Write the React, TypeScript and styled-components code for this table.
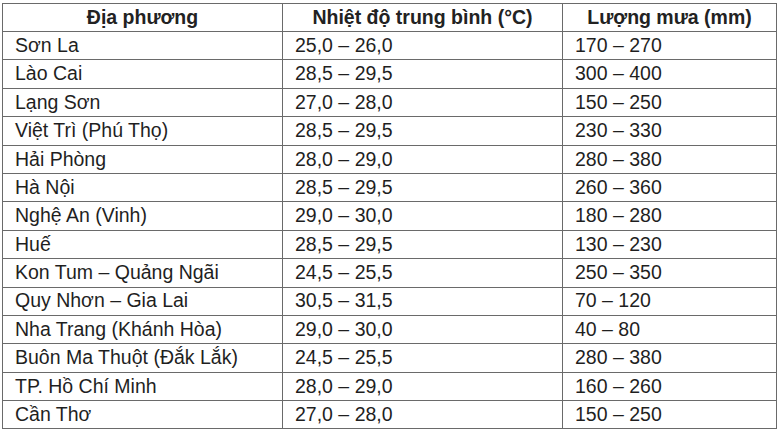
import React from 'react'
import styled, { createGlobalStyle } from 'styled-components'

const GlobalStyle = createGlobalStyle`
  html, body {
    margin: 0;
    padding: 0;
    background: #ffffff;
  }
`

const Page = styled.div`
  padding: 3px 0 0 2px;
  font-family: 'Liberation Sans', Arial, sans-serif;
  color: #1f1f1f;
`

const Table = styled.table`
  border-collapse: collapse;
  width: 771px;
  table-layout: fixed;
`

const HeadCell = styled.th<{ $width: number }>`
  width: ${(p) => p.$width}px;
  height: 27px;
  padding: 0;
  border: 1px solid #6a6a6a;
  font-size: 19.5px;
  line-height: 1;
  font-weight: bold;
  text-align: center;
  color: #222;
`

const Cell = styled.td`
  height: 27.4px;
  padding: 0 0 0 12px;
  border: 1px solid #6a6a6a;
  font-size: 19.5px;
  line-height: 1;
  white-space: nowrap;
`

const rows: [string, string, string][] = [
  ['Sơn La', '25,0 – 26,0', '170 – 270'],
  ['Lào Cai', '28,5 – 29,5', '300 – 400'],
  ['Lạng Sơn', '27,0 – 28,0', '150 – 250'],
  ['Việt Trì (Phú Thọ)', '28,5 – 29,5', '230 – 330'],
  ['Hải Phòng', '28,0 – 29,0', '280 – 380'],
  ['Hà Nội', '28,5 – 29,5', '260 – 360'],
  ['Nghệ An (Vinh)', '29,0 – 30,0', '180 – 280'],
  ['Huế', '28,5 – 29,5', '130 – 230'],
  ['Kon Tum – Quảng Ngãi', '24,5 – 25,5', '250 – 350'],
  ['Quy Nhơn – Gia Lai', '30,5 – 31,5', '70 – 120'],
  ['Nha Trang (Khánh Hòa)', '29,0 – 30,0', '40 – 80'],
  ['Buôn Ma Thuột (Đắk Lắk)', '24,5 – 25,5', '280 – 380'],
  ['TP. Hồ Chí Minh', '28,0 – 29,0', '160 – 260'],
  ['Cần Thơ', '27,0 – 28,0', '150 – 250'],
]

export default function App() {
  return (
    <Page>
      <GlobalStyle />
      <Table>
        <thead>
          <tr>
            <HeadCell $width={279}>Địa phương</HeadCell>
            <HeadCell $width={279}>Nhiệt độ trung bình (°C)</HeadCell>
            <HeadCell $width={213}>Lượng mưa (mm)</HeadCell>
          </tr>
        </thead>
        <tbody>
          {rows.map(([place, temp, rain]) => (
            <tr key={place}>
              <Cell>{place}</Cell>
              <Cell>{temp}</Cell>
              <Cell>{rain}</Cell>
            </tr>
          ))}
        </tbody>
      </Table>
    </Page>
  )
}
